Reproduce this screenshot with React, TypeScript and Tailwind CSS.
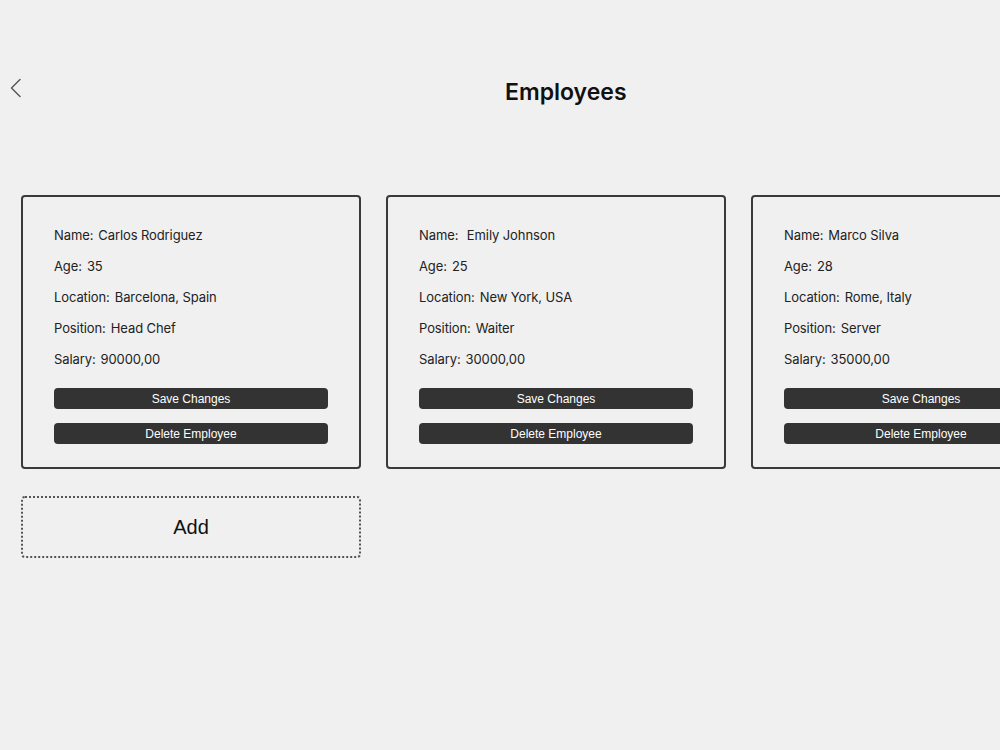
import React from 'react';

const employees = [
  { name: 'Carlos Rodriguez', age: '35', location: 'Barcelona, Spain', position: 'Head Chef', salary: '90000,00' },
  { name: ' Emily Johnson', age: '25', location: 'New York, USA', position: 'Waiter', salary: '30000,00' },
  { name: 'Marco Silva', age: '28', location: 'Rome, Italy', position: 'Server', salary: '35000,00' },
];

function EmployeeCard({ emp }: { emp: (typeof employees)[number] }) {
  const rows = [
    ['Name:', emp.name],
    ['Age:', emp.age],
    ['Location:', emp.location],
    ['Position:', emp.position],
    ['Salary:', emp.salary],
  ];
  return (
    <div className="w-[340px] h-[274px] shrink-0 border-2 border-[#3a3a3a] rounded-[4px] px-[31px] pt-[23px]">
      {rows.map(([label, value]) => (
        <p key={label} className="h-[31px] flex items-center gap-[5px] text-[13px] tracking-[-0.1px] text-[#222] whitespace-pre">
          <span>{label}</span>
          <span>{value}</span>
        </p>
      ))}
      <div className="mt-[13px] flex flex-col gap-[14px]">
        <button className="h-[21px] w-full rounded-[4px] bg-[#333] text-white text-[12px] font-['Liberation_Sans',sans-serif]">
          Save Changes
        </button>
        <button className="h-[21px] w-full rounded-[4px] bg-[#333] text-white text-[12px] font-['Liberation_Sans',sans-serif]">
          Delete Employee
        </button>
      </div>
    </div>
  );
}

export default function App() {
  return (
    <div className="w-[1000px] h-[750px] overflow-hidden bg-[#f0f0f0] font-['Inter',sans-serif]">
      <div className="h-[183px] flex items-start pt-[76px]">
        <button className="ml-[8px] w-[16px] h-[24px] text-[#555]">
          <svg width="16" height="24" viewBox="0 0 16 24" fill="none" stroke="currentColor" strokeWidth="1.4" strokeLinecap="round" strokeLinejoin="round">
            <path d="M12 3.5 3.5 12 12 20.5" />
          </svg>
        </button>
        <h1 className="ml-[481px] text-[23px] font-semibold text-[#111] leading-[32px]">Employees</h1>
      </div>
      <div className="flex gap-[25px] pl-[21px] pt-[12px]">
        {employees.map((e) => (
          <EmployeeCard key={e.name} emp={e} />
        ))}
      </div>
      <div className="ml-[21px] mt-[27px] w-[340px] h-[62px] border-2 border-dotted border-[#555] rounded-[4px] flex items-center justify-center text-[20px] text-[#111] font-['Liberation_Sans',sans-serif]">
        Add
      </div>
    </div>
  );
}
